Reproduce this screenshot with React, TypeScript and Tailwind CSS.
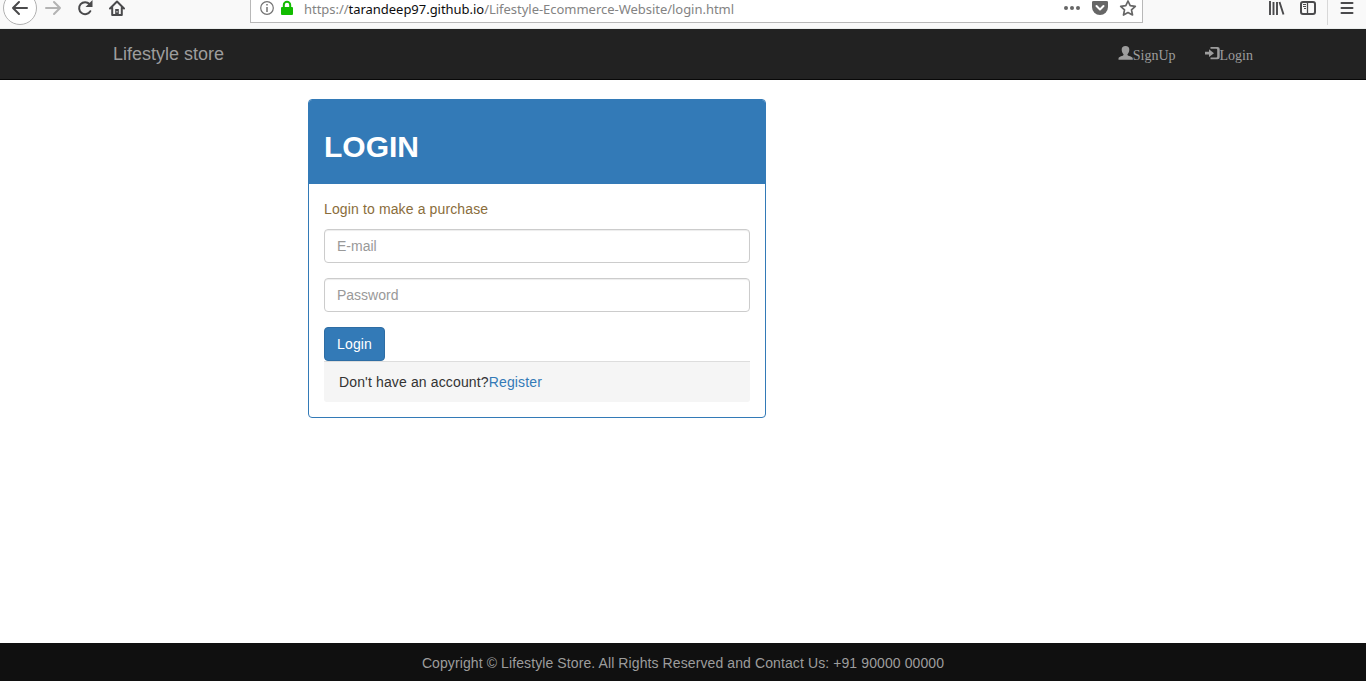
import React from 'react';

function BrowserBar() {
  return (
    <div className="flex h-[29px] w-full shrink-0 items-start overflow-hidden border-b border-[#ebeeed] bg-[#f9f9f9] font-['Noto_Sans',sans-serif]">
      <svg className="h-7 w-[250px] shrink-0" viewBox="0 0 250 28" fill="none" stroke="#4a4a4c" strokeWidth="2">
        <circle cx="20" cy="8" r="16.500" fill="#fff" stroke="#b1b1b1" strokeWidth="1" />
        <path d="M27 8H13M19 2L13 8L19 14" strokeLinecap="round" strokeLinejoin="round" />
        <path d="M46 8H60M54 2L60 8L54 14" stroke="#b3b3b3" strokeLinecap="round" strokeLinejoin="round" />
        <path d="M90.300 11.200A6 6 0 1 1 89.500 4" strokeLinecap="round" />
        <path d="M92.500 0V7H85.500Z" fill="#4a4a4c" stroke="none" />
        <path d="M110 8.500L117 1.500L124 8.500M112.200 7.500V15H121.800V7.500" strokeLinecap="round" strokeLinejoin="round" />
        <path d="M115.200 9H118.800V15H115.200Z" fill="#4a4a4c" stroke="none" />
        <path d="M117 11V12.500" stroke="#f9f9f9" strokeWidth="1" />
      </svg>
      <div className="flex h-[23px] w-[893px] shrink-0 items-start border border-t-0 border-[#b8b8b8] bg-white">
        <svg className="h-[22px] w-[53px] shrink-0" viewBox="251 0 53 22" fill="none">
          <circle cx="267" cy="8" r="6.300" stroke="#737373" strokeWidth="1.200" />
          <path d="M267 7V12M267 4V5.500" stroke="#737373" strokeWidth="1.500" />
          <path d="M283.800 7V5A3.200 3.200 0 0 1 290.200 5V7" stroke="#12bc00" strokeWidth="2" />
          <rect x="281" y="7" width="12" height="8" rx="1" fill="#12bc00" />
        </svg>
        <div className="h-[22px] flex-1 whitespace-nowrap text-[13px] leading-[19px] tracking-[-0.03px] text-[#838383]">
          https://<span className="text-[#0c0c0d]">tarandeep97.github.io</span>/Lifestyle-Ecommerce-Website/login.html
        </div>
        <svg className="h-[22px] w-[82px] shrink-0" viewBox="1060 0 82 22" fill="#666">
          <circle cx="1066" cy="8" r="2" />
          <circle cx="1072" cy="8" r="2" />
          <circle cx="1078" cy="8" r="2" />
          <path d="M1092 2Q1092 1 1093.500 1H1106.500Q1108 1 1108 2V7A8 8 0 0 1 1092 7Z" />
          <path d="M1096.500 6L1100 9.500L1103.500 6" fill="none" stroke="#fff" strokeWidth="2" strokeLinecap="round" strokeLinejoin="round" />
          <path d="M1128 1L1130.200 5.700L1135.300 6.300L1131.500 9.800L1132.500 15L1128 12.500L1123.500 15L1124.500 9.800L1120.700 6.300L1125.800 5.700Z" fill="none" stroke="#666" strokeWidth="1.700" strokeLinejoin="round" />
        </svg>
      </div>
      <svg className="h-7 w-[223px] shrink-0" viewBox="1143 0 223 28" fill="none" stroke="#4a4a4c" strokeWidth="2">
        <path d="M1270 1V15M1273.500 2V15M1277 2V15M1279.500 2L1283.500 14.500" strokeWidth="1.900" />
        <rect x="1301" y="2" width="14" height="12" rx="2" />
        <path d="M1307.500 2V14" strokeWidth="1.300" />
        <path d="M1303 4.500H1306M1303 6.500H1306M1304 8.500H1306" strokeWidth="1" />
        <path d="M1327.500 0V25" stroke="#d8d8d8" strokeWidth="1" />
        <path d="M1341.500 3H1352.500M1341.500 8H1352.500M1341.500 13H1352.500" strokeLinecap="round" />
      </svg>
    </div>
  );
}

function UserIcon() {
  return (
    <svg className="mb-[5px] h-[14px] w-[15px]" viewBox="0 0 15 14" fill="currentColor">
      <path d="M7.500 0C10 0 11.300 1.400 11.300 3.600C11.300 5.600 10.600 7.200 9.500 8.200V9C9.500 9.900 14.800 10.500 14.800 12.400V13.700H.5V12.400C.5 10.500 5.500 9.900 5.500 9V8.200C4.400 7.200 3.700 5.600 3.700 3.600C3.700 1.400 5 0 7.500 0Z" />
    </svg>
  );
}

function LoginIcon() {
  return (
    <svg className="mb-[5px] h-[14px] w-[15px]" viewBox="0 0 15 14" fill="currentColor">
      <path d="M5.500 1H12.500Q14.700 1 14.700 3V11.300Q14.700 13.300 12.500 13.300H5.500V11.500H11.200Q12.200 11.500 12.200 10.600V3.700Q12.200 2.800 11.200 2.800H5.500Z" />
      <path d="M0 5.700H4V3.200L9 7.200L4 11V8.500H0Z" />
    </svg>
  );
}

function NavBar() {
  return (
    <nav className="flex h-[51px] shrink-0 items-start justify-between border-b border-[#080808] bg-[#222] pl-[113px] pr-[113px] text-[#9d9d9d]">
      <a className="pt-[15px] text-[18px] leading-5" href="#">Lifestyle store</a>
      <div className="flex gap-[29px] pt-4 font-['Liberation_Serif',serif] text-[14px] leading-[21px]">
        <a className="flex items-center" href="#"><UserIcon /><span>SignUp</span></a>
        <a className="flex items-center" href="#"><LoginIcon /><span>Login</span></a>
      </div>
    </nav>
  );
}

export default function App() {
  const field =
    'block h-[34px] w-full rounded-[4px] border border-[#ccc] bg-white px-3 py-1.5 text-[14px] leading-5 shadow-[inset_0_1px_1px_rgba(0,0,0,0.075)] outline-none placeholder:text-[#999] placeholder:opacity-100';
  return (
    <div className="flex h-[681px] w-full flex-col overflow-hidden bg-white font-['Liberation_Sans',Arial,sans-serif] text-[14px] leading-5 text-[#333]">
      <BrowserBar />
      <NavBar />
      <main className="flex-1 pl-[308px] pt-[19px]">
        <section className="h-[319px] w-[458px] overflow-hidden rounded-[4px] border border-[#337ab7] bg-white">
          <header className="h-[84px] bg-[#337ab7] px-[15px] pt-[29px] text-white">
            <h1 className="text-[30px] font-bold leading-[35px]">LOGIN</h1>
          </header>
          <form className="p-[15px]" onSubmit={(e) => e.preventDefault()}>
            <p className="mb-2.5 tracking-[0.13px] text-[#8a6d3b]">Login to make a purchase</p>
            <input className={field} type="email" placeholder="E-mail" />
            <input className={`${field} mt-[15px]`} type="password" placeholder="Password" />
            <button className="mt-[15px] block h-[34px] w-[61px] rounded-[4px] border border-[#2e6da4] bg-[#337ab7] px-3 tracking-[0.13px] text-white">Login</button>
            <div className="h-[41px] rounded-b-[3px] border-t border-[#ddd] bg-[#f5f5f5] px-[15px] py-2.5 tracking-[0.14px]">
              Don't have an account?<a className="text-[#337ab7]" href="#">Register</a>
            </div>
          </form>
        </section>
      </main>
      <footer className="h-[38px] shrink-0 bg-[#101010] pt-2.5 text-center tracking-[0.1px] text-[#9d9d9d]">
        Copyright © Lifestyle Store. All Rights Reserved and Contact Us: +91 90000 00000
      </footer>
    </div>
  );
}
